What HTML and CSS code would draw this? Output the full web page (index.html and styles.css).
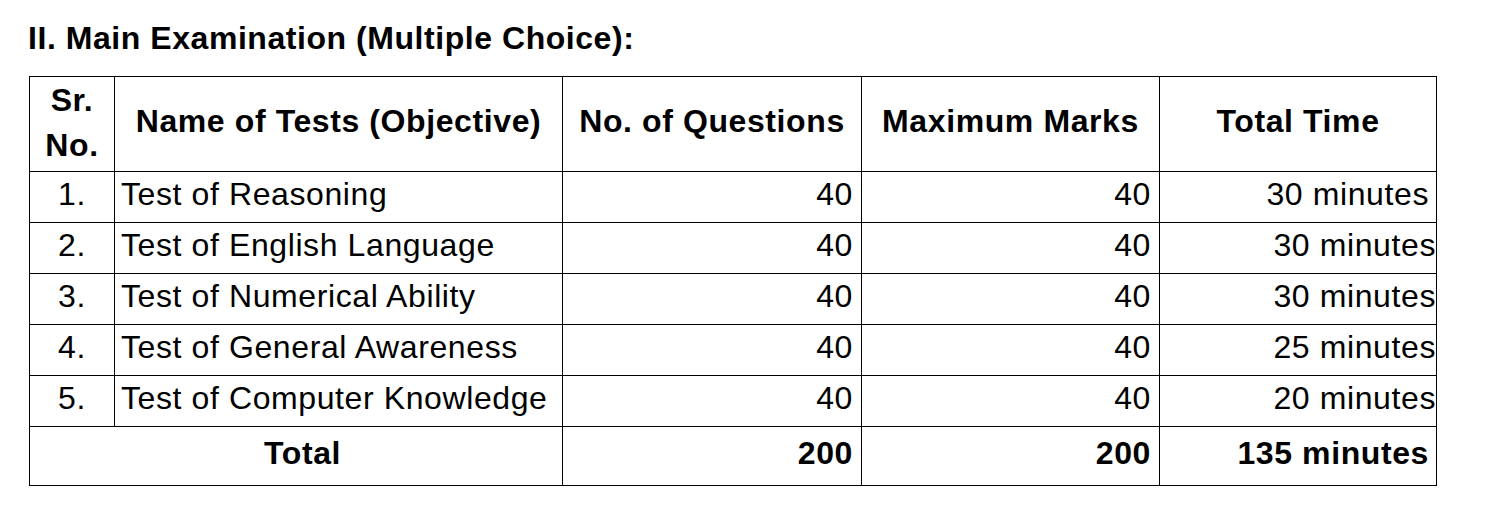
FILE: index.html
```html
<!DOCTYPE html>
<html lang="en">
<head>
<meta charset="utf-8">
<title>Main Examination</title>
<link rel="stylesheet" href="styles.css">
</head>
<body>
<div class="page">
  <h2 class="title">II. Main Examination (Multiple Choice):</h2>
  <table class="exam">
    <colgroup>
      <col class="c-sr">
      <col class="c-name">
      <col class="c-q">
      <col class="c-m">
      <col class="c-t">
    </colgroup>
    <thead>
      <tr>
        <th class="h-sr">Sr.<br>No.</th>
        <th class="h">Name of Tests (Objective)</th>
        <th class="h">No. of Questions</th>
        <th class="h">Maximum Marks</th>
        <th class="h">Total Time</th>
      </tr>
    </thead>
    <tbody>
      <tr>
        <td class="sr">1.</td>
        <td class="name">Test of Reasoning</td>
        <td class="num">40</td>
        <td class="num">40</td>
        <td class="time pad">30 minutes</td>
      </tr>
      <tr>
        <td class="sr">2.</td>
        <td class="name">Test of English Language</td>
        <td class="num">40</td>
        <td class="num">40</td>
        <td class="time">30 minutes</td>
      </tr>
      <tr>
        <td class="sr">3.</td>
        <td class="name">Test of Numerical Ability</td>
        <td class="num">40</td>
        <td class="num">40</td>
        <td class="time">30 minutes</td>
      </tr>
      <tr>
        <td class="sr">4.</td>
        <td class="name">Test of General Awareness</td>
        <td class="num">40</td>
        <td class="num">40</td>
        <td class="time">25 minutes</td>
      </tr>
      <tr>
        <td class="sr">5.</td>
        <td class="name">Test of Computer Knowledge</td>
        <td class="num">40</td>
        <td class="num">40</td>
        <td class="time">20 minutes</td>
      </tr>
      <tr class="total">
        <td class="t-label" colspan="2">Total</td>
        <td class="num">200</td>
        <td class="num">200</td>
        <td class="time pad">135 minutes</td>
      </tr>
    </tbody>
  </table>
</div>
</body>
</html>
```

FILE: styles.css
```css
html, body {
  margin: 0;
  padding: 0;
  background: #ffffff;
}

body {
  font-family: "Liberation Sans", Arial, sans-serif;
  color: #000000;
}

.page {
  padding: 20px 0 0 28px;
}

.title {
  margin: 0;
  font-size: 32px;
  font-weight: bold;
  line-height: 36px;
  letter-spacing: 0.55px;
}

.exam {
  margin: 20px 0 0 1px;
  border-collapse: collapse;
  table-layout: fixed;
  width: 1408px;
  font-size: 32px;
  letter-spacing: 0.6px;
}

.c-sr { width: 85px; }
.c-name { width: 448px; }
.c-q { width: 299px; }
.c-m { width: 298px; }
.c-t { width: 277px; }

.exam th,
.exam td {
  border: 1px solid #000000;
  white-space: nowrap;
  overflow: visible;
}

.exam th {
  font-weight: bold;
  text-align: center;
  vertical-align: top;
}

.h-sr {
  line-height: 45px;
  padding: 1px 0 3px 0;
}

.h {
  line-height: 36px;
  padding: 26px 0 32px 0;
}

.exam td {
  line-height: 36px;
  vertical-align: top;
  padding: 4px 0 10px 0;
}

.sr {
  text-align: center;
}

.name {
  text-align: left;
  padding-left: 6px !important;
}

.num {
  text-align: right;
  padding-right: 8px !important;
}

.time {
  text-align: right;
  padding-right: 0 !important;
}

.time.pad {
  padding-right: 7px !important;
}

.total td {
  font-weight: bold;
  padding-top: 8px;
  padding-bottom: 14px;
}

.t-label {
  text-align: center;
  padding-left: 13px !important;
}
```
